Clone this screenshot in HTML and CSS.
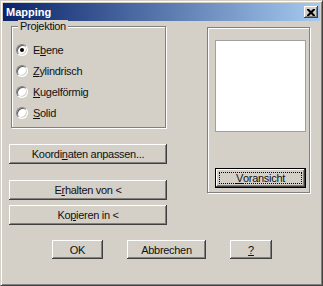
FILE: index.html
```html
<!DOCTYPE html>
<html lang="de">
<head>
    <meta charset="UTF-8">
    <title>Mapping</title>
    <link rel="stylesheet" href="styles.css">
</head>
<body>

    <div class="window">
        <div class="titlebar">
            <span class="title">Mapping</span>
            <span class="close">
                <svg width="8" height="7" viewBox="0 0 8 7">
                    <path d="M0 0h2l2 2 2-2h2v1l-2.5 2.5 2.5 2.5v1h-2l-2-2-2 2h-2v-1l2.5-2.5-2.5-2.5z" fill="#000"/>
                </svg>
            </span>
        </div>

        <div class="content">
            <div class="main">
                <div class="left">
                    <div class="group">
                        <span class="group-label">Projektion</span>
                        <div class="radios">
                            <div class="radio-row"><span class="radio checked"></span><span>E<u>b</u>ene</span></div>
                            <div class="radio-row"><span class="radio"></span><span><u>Z</u>ylindrisch</span></div>
                            <div class="radio-row"><span class="radio"></span><span><u>K</u>ugelförmig</span></div>
                            <div class="radio-row"><span class="radio"></span><span><u>S</u>olid</span></div>
                        </div>
                    </div>

                    <div class="btn wide first">Koordi<u>n</u>aten anpassen...</div>
                    <div class="btn wide second">E<u>r</u>halten von &lt;</div>
                    <div class="btn wide third">Ko<u>p</u>ieren in &lt;</div>
                </div>

                <div class="right">
                    <div class="panel">
                        <div class="preview"></div>
                        <div class="btn default"><span class="focus"><u>V</u>oransicht</span></div>
                    </div>
                </div>
            </div>

            <div class="actions">
                <div class="btn ok">OK</div>
                <div class="btn cancel">Abbrechen</div>
                <div class="btn help"><u>?</u></div>
            </div>
        </div>
    </div>

</body>
</html>
```

FILE: styles.css
```css
* {
    box-sizing: border-box;
}

body {
    margin: 0;
    font-family: 'Liberation Sans Narrow', 'Liberation Sans', Arial, sans-serif;
    font-size: 11px;
    letter-spacing: -0.3px;
    color: #111;
    background-color: #d4d0c8;
}

u {
    text-decoration-thickness: 1px;
    text-underline-offset: 1px;
}

.window {
    width: 323px;
    height: 286px;
    padding: 2px;
    background-color: #d4d0c8;
    border: 1px solid;
    border-color: #d4d0c8 #404040 #404040 #d4d0c8;
    box-shadow: inset 1px 1px #fff, inset -1px -1px #808080;
}

/* title bar */

.titlebar {
    height: 18px;
    display: flex;
    align-items: center;
    justify-content: space-between;
    padding: 0 2px 0 3px;
    background: linear-gradient(to right, #0a246a, #a6caf0);
}

.title {
    color: #fff;
    font-family: 'Liberation Sans', Arial, sans-serif;
    font-weight: bold;
    font-size: 11px;
    letter-spacing: 0;
}

.close {
    width: 14px;
    height: 12px;
    display: flex;
    align-items: center;
    justify-content: center;
    background-color: #d4d0c8;
    box-shadow: inset -1px -1px #404040, inset 1px 1px #fff, inset -2px -2px #808080;
}

/* body */

.content {
    padding-left: 6px;
}

.main {
    display: flex;
}

.left {
    width: 158px;
    display: flex;
    flex-direction: column;
}

.group {
    margin: 5px 0 0 2px;
    width: 155px;
    height: 102px;
    display: flex;
    flex-direction: column;
    align-items: flex-start;
    border: 1px solid #808080;
    box-shadow: inset 1px 1px #fff, 1px 1px #fff;
    padding: 0 0 4px 4px;
}

.group-label {
    margin: -7px 0 0 2px;
    height: 13px;
    line-height: 13px;
    padding: 0 2px;
    background-color: #d4d0c8;
}

.radios {
    margin-top: 6px;
    display: flex;
    flex-direction: column;
}

.radio-row {
    height: 21px;
    display: flex;
    align-items: center;
    gap: 5px;
}

.radio {
    width: 12px;
    height: 12px;
    border-radius: 50%;
    position: relative;
    background-color: #fff;
    border: 1px solid;
    border-color: #808080 #fff #fff #808080;
    box-shadow: inset 1px 1px #606060, inset -1px -1px #d4d0c8;
}

.radio.checked::after {
    content: "";
    position: absolute;
    left: 3px;
    top: 3px;
    width: 4px;
    height: 4px;
    border-radius: 50%;
    background-color: #000;
}

/* buttons */

.btn {
    height: 20px;
    display: flex;
    align-items: center;
    justify-content: center;
    background-color: #d4d0c8;
    box-shadow: inset -1px -1px #404040, inset 1px 1px #fff, inset -2px -2px #808080;
}

.btn.wide {
    width: 158px;
}

.btn.first {
    margin-top: 16px;
}

.btn.second {
    margin-top: 16px;
}

.btn.third {
    margin-top: 5px;
}

.right {
    margin-left: 40px;
    margin-top: 6px;
}

.panel {
    width: 103px;
    height: 166px;
    border: 1px solid #808080;
    box-shadow: inset 1px 1px #fff, 1px 1px #fff;
    padding: 12px 0 0 7px;
}

.preview {
    width: 91px;
    height: 92px;
    background-color: #fff;
    border: 1px solid #a0a0a0;
}

.btn.default {
    width: 91px;
    margin-top: 36px;
    border: 1px solid #000;
    padding: 3px;
}

.focus {
    flex: 1;
    align-self: stretch;
    display: flex;
    align-items: center;
    justify-content: center;
    border: 1px dotted #000;
}

.actions {
    display: flex;
    margin: 15px 0 0 43px;
}

.btn.ok {
    width: 51px;
    height: 19px;
}

.btn.cancel {
    width: 79px;
    height: 19px;
    margin-left: 24px;
}

.btn.help {
    width: 42px;
    height: 19px;
    margin-left: 24px;
}
```
